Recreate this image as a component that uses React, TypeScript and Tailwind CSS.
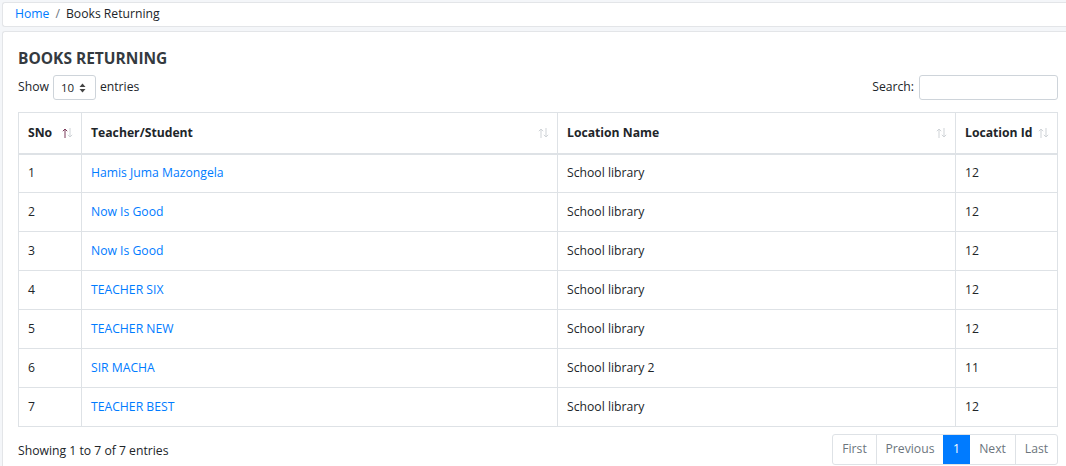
import React from 'react';

const rows = [
  { no: 1, name: 'Hamis Juma Mazongela', loc: 'School library', id: 12 },
  { no: 2, name: 'Now Is Good', loc: 'School library', id: 12 },
  { no: 3, name: 'Now Is Good', loc: 'School library', id: 12 },
  { no: 4, name: 'TEACHER SIX', loc: 'School library', id: 12 },
  { no: 5, name: 'TEACHER NEW', loc: 'School library', id: 12 },
  { no: 6, name: 'SIR MACHA', loc: 'School library 2', id: 11 },
  { no: 7, name: 'TEACHER BEST', loc: 'School library', id: 12 },
];

function SortIcon({ active }: { active?: boolean }) {
  return (
    <svg className="absolute right-[8px] top-[15px]" width="11" height="10" viewBox="0 0 11 10">
      <g stroke={active ? '#7a3b5a' : '#cfd3d7'} strokeWidth="1" fill="none">
        <path d="M3 1 V10" />
        <path d="M0.8 3.2 L3 1 L5.2 3.2" />
      </g>
      <g stroke="#cfd3d7" strokeWidth="1" fill="none">
        <path d="M8 0 V9" />
        <path d="M5.8 6.8 L8 9 L10.2 6.8" />
      </g>
    </svg>
  );
}

export default function App() {
  return (
    <div className="min-h-screen bg-[#f4f6f9] pl-[2px] pt-[2px] text-[12.2px] text-[#212529]" style={{ fontFamily: '"Open Sans", "Noto Sans", sans-serif' }}>
      <div className="flex h-[25px] items-center rounded-l-[3px] border border-r-0 border-[#e3e5e8] bg-white pl-[12px]">
        <a className="text-[#007bff]">Home</a>
        <span className="px-[6px] text-[#6c757d]">/</span>
        <span>Books Returning</span>
      </div>

      <div className="mt-[4px] rounded-tl-[3px] border-l border-t border-[#e3e5e8] bg-white pl-[15px] pr-[8px] pt-[14px] pb-[3px]">
        <h3 className="text-[15.5px] font-bold leading-[24px] text-[#343a40]">BOOKS RETURNING</h3>

        <div className="mt-[5px] flex items-center justify-between">
          <div className="flex items-center">
            <span>Show</span>
            <span className="mx-[4px] flex h-[25px] w-[43px] items-center rounded-[3px] border border-[#ced4da] pl-[7px] text-[11.5px]">
              10
              <svg className="ml-[5px]" width="7" height="10" viewBox="0 0 7 10">
                <path d="M3.5 0.5 L6.5 4 H0.5 Z" fill="#444" />
                <path d="M3.5 9.5 L6.5 6 H0.5 Z" fill="#444" />
              </svg>
            </span>
            <span>entries</span>
          </div>
          <div className="flex items-center">
            <span>Search:</span>
            <input className="ml-[5px] h-[25px] w-[139px] rounded-[3px] border border-[#ced4da] outline-none" />
          </div>
        </div>

        <table className="mt-[12px] w-[1040px] border-collapse border border-[#dee2e6]">
          <thead>
            <tr className="h-[41px] border-b-2 border-[#dee2e6] text-left font-bold">
              <th className="relative w-[63px] border-r border-[#dee2e6] pl-[9px]">SNo<SortIcon active /></th>
              <th className="relative w-[476px] border-r border-[#dee2e6] pl-[9px]">Teacher/Student<SortIcon /></th>
              <th className="relative w-[398px] border-r border-[#dee2e6] pl-[9px]">Location Name<SortIcon /></th>
              <th className="relative pl-[9px]">Location Id<SortIcon /></th>
            </tr>
          </thead>
          <tbody>
            {rows.map(r => (
              <tr key={r.no} className="h-[39px] border-b border-[#dee2e6]">
                <td className="border-r border-[#dee2e6] pl-[9px]">{r.no}</td>
                <td className="border-r border-[#dee2e6] pl-[9px] text-[#007bff]">{r.name}</td>
                <td className="border-r border-[#dee2e6] pl-[9px]">{r.loc}</td>
                <td className="pl-[9px]">{r.id}</td>
              </tr>
            ))}
          </tbody>
        </table>

        <div className="mt-[7px] flex w-[1040px] items-center justify-between">
          <span className="pt-[4px]">Showing 1 to 7 of 7 entries</span>
          <div className="flex h-[31px] rounded-[3px] border border-[#dee2e6]">
            <span className="flex w-[43px] items-center justify-center text-[#6c757d]">First</span>
            <span className="flex w-[67px] items-center justify-center border-l border-[#dee2e6] text-[#6c757d]">Previous</span>
            <span className="flex w-[27px] items-center justify-center bg-[#007bff] text-white">1</span>
            <span className="flex w-[45px] items-center justify-center text-[#6c757d]">Next</span>
            <span className="flex w-[42px] items-center justify-center border-l border-[#dee2e6] text-[#6c757d]">Last</span>
          </div>
        </div>
      </div>
    </div>
  );
}
